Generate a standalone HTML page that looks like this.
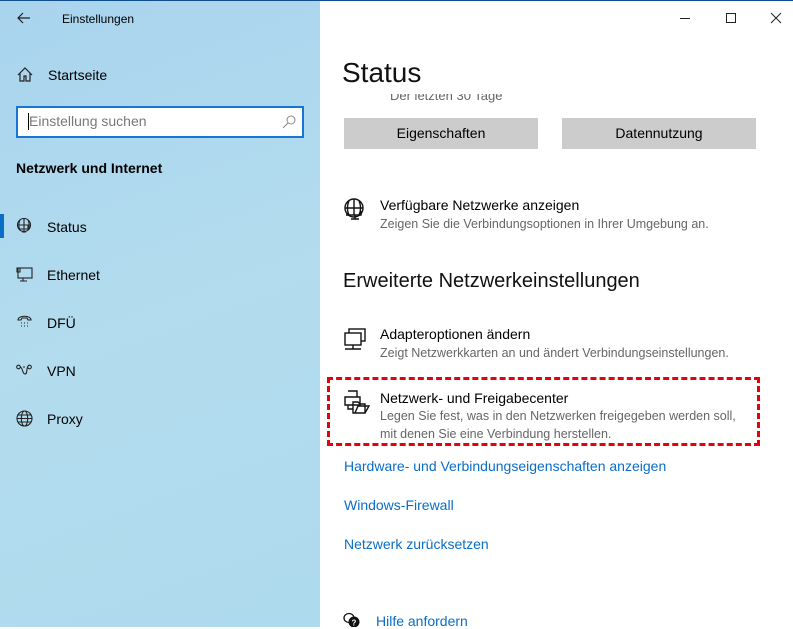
<!DOCTYPE html>
<html><head><meta charset="utf-8"><style>
*{margin:0;padding:0;box-sizing:border-box}
body{width:793px;height:627px;overflow:hidden;font-family:"Liberation Sans",sans-serif;position:relative;background:#fff;color:#000}
.l{position:absolute;left:0;top:0;width:320px;height:627px;background:linear-gradient(160deg,#a9d4ee 0%,#b3dcee 50%,#aedaed 100%)}
.t{position:absolute;white-space:nowrap;line-height:1}
.topline{position:absolute;left:0;top:0;width:793px;height:1px;background:#0f4f8f}
svg{position:absolute}
.btn{position:absolute;background:#cccccc;height:31px;top:118px;width:194px;font-size:14px;text-align:center;line-height:31px}
.sub{color:#666;font-size:12.5px}
.lk{color:#0a6ec7;font-size:14px}
</style></head><body>
<div class="l"></div>
<div class="topline"></div>
<svg style="left:17px;top:11px" width="14" height="14" viewBox="0 0 14 14"><path d="M13 7H1M6 2L1 7l5 5" fill="none" stroke="#222" stroke-width="1.2"/></svg>
<div class="t" style="left:62px;top:13px;font-size:12px">Einstellungen</div>
<svg style="left:17px;top:67px" width="16" height="15" viewBox="0 0 16 15"><path d="M1 8L8 1l7 7M3 6v8h4v-5h2v5h4V6" fill="none" stroke="#222" stroke-width="1.2"/></svg>
<div class="t" style="left:48px;top:68px;font-size:14px">Startseite</div>
<div style="position:absolute;left:16px;top:106px;width:288px;height:32px;background:#fff;border:2px solid #1477d4"></div>
<div style="position:absolute;left:28px;top:113px;width:1px;height:17px;background:#000"></div>
<div class="t" style="left:29px;top:114px;font-size:14px;color:#777">Einstellung suchen</div>
<svg style="left:282px;top:115px" width="14" height="14" viewBox="0 0 14 14"><circle cx="9" cy="5" r="4" fill="none" stroke="#888"/><path d="M6 8L1 13" stroke="#888"/></svg>
<div class="t" style="left:16px;top:161px;font-size:14px;font-weight:bold">Netzwerk und Internet</div>
<div style="position:absolute;left:0;top:214px;width:4px;height:24px;background:#0a6ec7"></div>
<svg style="left:16px;top:218px" width="16" height="16" viewBox="0 0 16 16" fill="none" stroke="#222" stroke-width="1.1"><circle cx="8" cy="7" r="6.5"/><path d="M1.5 7h13M8 .5v13M4 2c-1.5 3-1.5 7 0 10M12 2c1.5 3 1.5 7 0 10"/><path d="M4 11h8v-4M6 14h4"/></svg>
<div class="t" style="left:47px;top:220px;font-size:14px">Status</div>
<svg style="left:16px;top:267px" width="17" height="15" viewBox="0 0 17 15" fill="none" stroke="#222" stroke-width="1.1"><rect x="2" y="1" width="14" height="10"/><path d="M1 1h3v4H1zM7 11v3M4 14h7"/></svg>
<div class="t" style="left:47px;top:268px;font-size:14px">Ethernet</div>
<svg style="left:17px;top:315px" width="15" height="14" viewBox="0 0 15 14" fill="none" stroke="#222" stroke-width="1.1"><path d="M1 5c0-5 13-5 13 0h-3l-1-2H5L4 5z"/><path d="M4 8h1M7 8h1M10 8h1M4 11h1M7 11h1M10 11h1" stroke-width="1"/></svg>
<div class="t" style="left:47px;top:316px;font-size:14px">DFÜ</div>
<svg style="left:16px;top:364px" width="16" height="12" viewBox="0 0 16 12" fill="none" stroke="#222" stroke-width="1.1"><circle cx="2.5" cy="3" r="1.8"/><circle cx="13.5" cy="3" r="1.8"/><path d="M4 3c3 0 2 7 5 7s1-7 3-7M7 3h2"/></svg>
<div class="t" style="left:47px;top:364px;font-size:14px">VPN</div>
<svg style="left:16px;top:410px" width="17" height="17" viewBox="0 0 17 17" fill="none" stroke="#222" stroke-width="1.1"><circle cx="8.5" cy="8.5" r="7.5"/><ellipse cx="8.5" cy="8.5" rx="3.2" ry="7.5"/><path d="M1 8.5h15M2 5h13M2 12h13"/></svg>
<div class="t" style="left:47px;top:412px;font-size:14px">Proxy</div>

<svg style="left:679px;top:14px" width="12" height="10"><path d="M1 4.5h10" stroke="#222"/></svg>
<svg style="left:725px;top:12px" width="12" height="12"><rect x="1.5" y="1.5" width="9" height="9" fill="none" stroke="#222"/></svg>
<svg style="left:770px;top:12px" width="12" height="12"><path d="M1 1l10 10M11 1L1 11" stroke="#222"/></svg>

<div class="t" style="left:342px;top:59px;font-size:28px;color:#111">Status</div>
<div style="position:absolute;left:320px;top:94px;width:473px;height:9px;overflow:hidden"><div class="t" style="left:70px;top:-5px;font-size:13px;color:#666">Der letzten 30 Tage</div></div>
<div class="btn" style="left:344px">Eigenschaften</div>
<div class="btn" style="left:562px">Datennutzung</div>

<svg style="left:343px;top:198px" width="24" height="24" viewBox="0 0 24 24" fill="none" stroke="#111" stroke-width="1.4"><circle cx="11" cy="10" r="9"/><path d="M2 10h18M11 1v16M6 3c-2 4-2 10 0 14M16 3c2 4 2 10 0 14"/><path d="M3 17h15v-4M8 21h8M12 17v4" /></svg>
<div class="t" style="left:380px;top:198px;font-size:14px">Verfügbare Netzwerke anzeigen</div>
<div class="t sub" style="left:380px;top:218px">Zeigen Sie die Verbindungsoptionen in Ihrer Umgebung an.</div>

<div class="t" style="left:343px;top:271px;font-size:20px;color:#111">Erweiterte Netzwerkeinstellungen</div>

<svg style="left:344px;top:328px" width="24" height="24" viewBox="0 0 24 24" fill="none" stroke="#111" stroke-width="1.4"><rect x="5" y="1" width="16" height="12"/><rect x="1" y="5" width="16" height="12" fill="#fff"/><path d="M9 17v4M1 21h16"/></svg>
<div class="t" style="left:380px;top:327px;font-size:14px">Adapteroptionen ändern</div>
<div class="t sub" style="left:380px;top:347px">Zeigt Netzwerkkarten an und ändert Verbindungseinstellungen.</div>

<div style="position:absolute;left:327px;top:377px;width:433px;height:69px;border:3px dashed #e8000c"></div>
<svg style="left:344px;top:390px" width="26" height="24" viewBox="0 0 26 24" fill="none" stroke="#111" stroke-width="1.4"><path d="M4 1h9v6M1 7h15v8H1zM4 15v4h5"/><path d="M9 12h5l2 2h5v9H9zM11 23l3-7h11l-4 7"/></svg>
<div class="t" style="left:380px;top:391px;font-size:14px">Netzwerk- und Freigabecenter</div>
<div class="t sub" style="left:380px;top:410px">Legen Sie fest, was in den Netzwerken freigegeben werden soll,</div>
<div class="t sub" style="left:380px;top:428px">mit denen Sie eine Verbindung herstellen.</div>

<div class="t lk" style="left:344px;top:459px">Hardware- und Verbindungseigenschaften anzeigen</div>
<div class="t lk" style="left:344px;top:498px">Windows-Firewall</div>
<div class="t lk" style="left:344px;top:537px">Netzwerk zurücksetzen</div>
<svg style="left:343px;top:612px" width="18" height="15" viewBox="0 0 18 15"><ellipse cx="6" cy="6" rx="5" ry="4.5" fill="none" stroke="#111" stroke-width="1.3"/><circle cx="11" cy="10" r="5.5" fill="#111"/><text x="11" y="13.5" font-size="8" fill="#fff" text-anchor="middle" font-family="Liberation Sans" font-weight="bold">?</text></svg>
<div class="t lk" style="left:376px;top:614px">Hilfe anfordern</div>
</body></html>
